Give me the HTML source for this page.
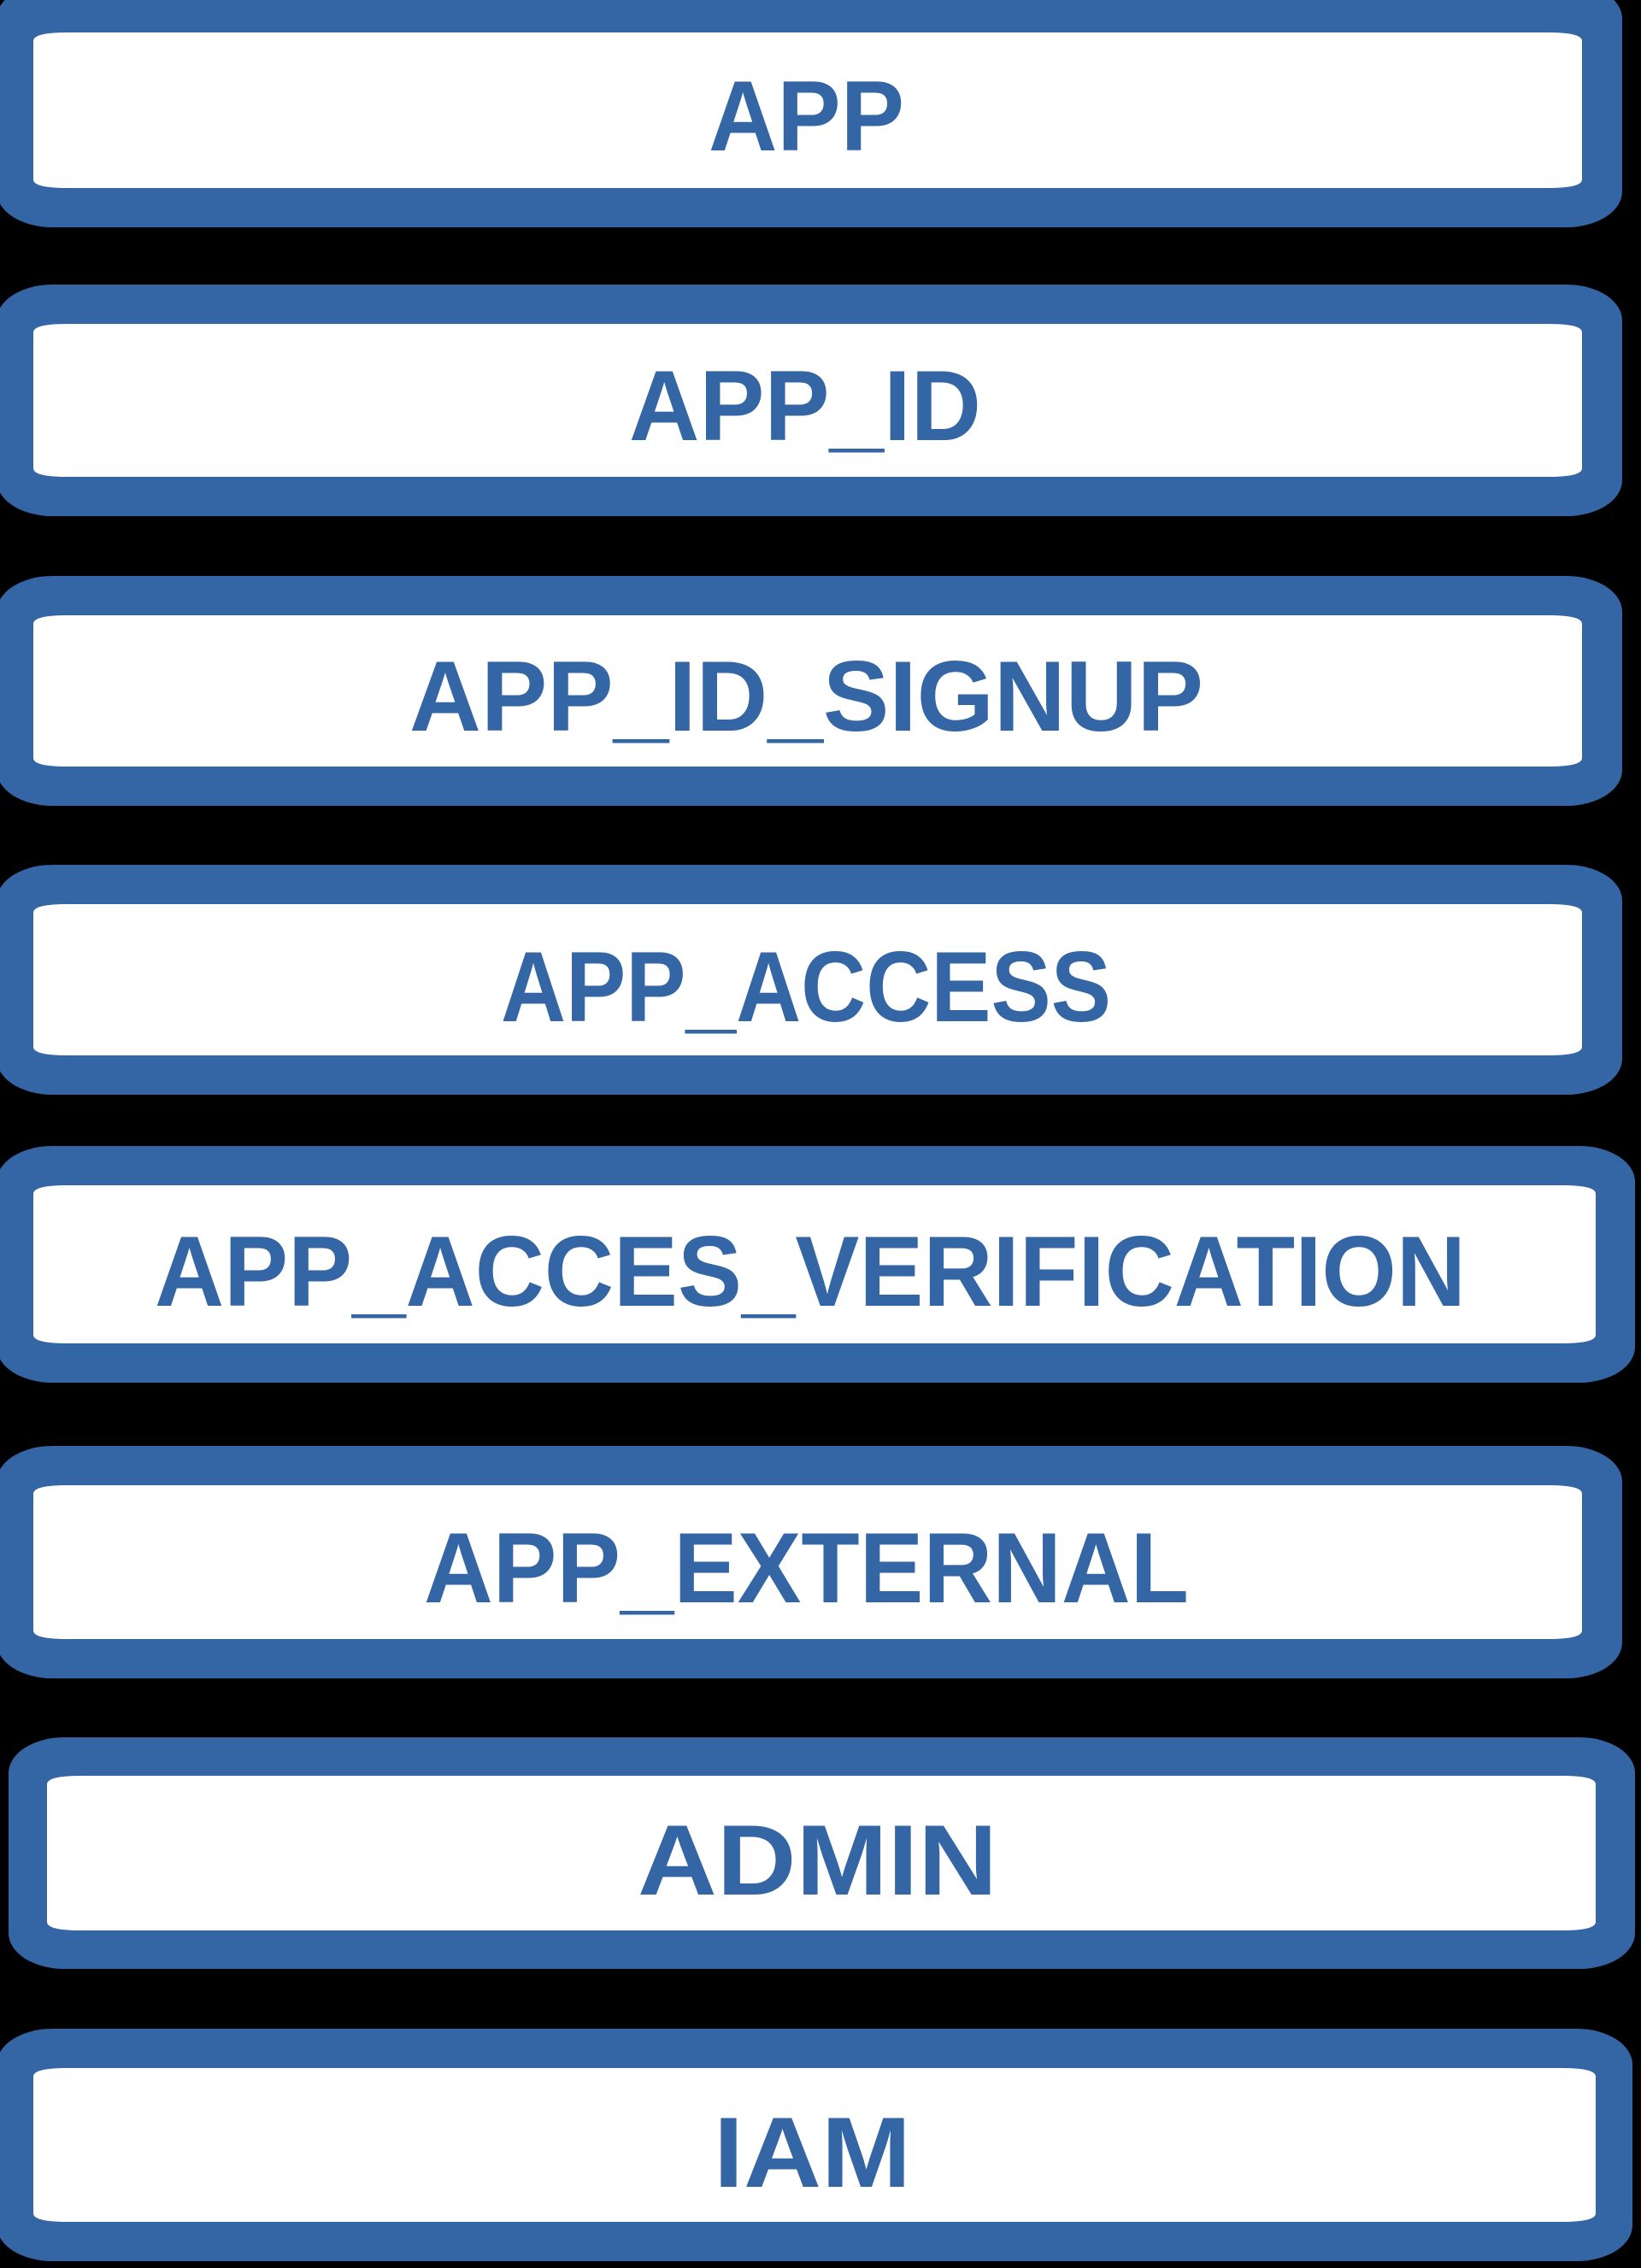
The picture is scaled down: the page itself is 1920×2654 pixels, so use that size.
<!DOCTYPE html>
<html><head><meta charset="utf-8"><style>
html,body{margin:0;padding:0;background:#000;}
svg{display:block;}
text{font-family:"Liberation Sans",sans-serif;font-weight:bold;font-size:117px;fill:#3465a5;}
</style></head><body>
<svg width="1920" height="2654" viewBox="0 0 1920 2654" xmlns="http://www.w3.org/2000/svg">
<rect width="1920" height="2654" fill="#000"/>
<g fill="#3465a5">
<rect x="-4" y="-20" width="1902" height="286" rx="65" ry="42"/>
<rect x="-4" y="333" width="1902" height="271" rx="65" ry="42"/>
<rect x="-4" y="674" width="1902" height="269" rx="65" ry="42"/>
<rect x="-4" y="1012" width="1902" height="269" rx="65" ry="42"/>
<rect x="-4" y="1341" width="1917" height="277" rx="65" ry="42"/>
<rect x="-4" y="1692" width="1902" height="272" rx="65" ry="42"/>
<rect x="10" y="2033" width="1903" height="271" rx="65" ry="42"/>
<rect x="-4" y="2374" width="1914" height="272" rx="65" ry="42"/>
</g>
<g fill="#fff">
<path d="M39,48 Q39,38 79,38 L1811,38 Q1851,38 1851,48 L1851,210 Q1851,220 1811,220 L79,220 Q39,220 39,210 Z"/>
<path d="M39,389 Q39,379 79,379 L1811,379 Q1851,379 1851,389 L1851,548 Q1851,558 1811,558 L79,558 Q39,558 39,548 Z"/>
<path d="M39,730 Q39,720 79,720 L1811,720 Q1851,720 1851,730 L1851,887 Q1851,897 1811,897 L79,897 Q39,897 39,887 Z"/>
<path d="M39,1068 Q39,1058 79,1058 L1811,1058 Q1851,1058 1851,1068 L1851,1225 Q1851,1235 1811,1235 L79,1235 Q39,1235 39,1225 Z"/>
<path d="M39,1397 Q39,1387 79,1387 L1827,1387 Q1867,1387 1867,1397 L1867,1562 Q1867,1572 1827,1572 L79,1572 Q39,1572 39,1562 Z"/>
<path d="M39,1748 Q39,1738 79,1738 L1811,1738 Q1851,1738 1851,1748 L1851,1908 Q1851,1918 1811,1918 L79,1918 Q39,1918 39,1908 Z"/>
<path d="M55,2088 Q55,2078 95,2078 L1827,2078 Q1867,2078 1867,2088 L1867,2249 Q1867,2259 1827,2259 L95,2259 Q55,2259 55,2249 Z"/>
<path d="M39,2430 Q39,2420 79,2420 L1827,2420 Q1867,2420 1867,2430 L1867,2590 Q1867,2600 1827,2600 L79,2600 Q39,2600 39,2590 Z"/>
</g>
<text x="829" y="176" textLength="229" lengthAdjust="spacingAndGlyphs">APP</text>
<text x="736" y="515" textLength="412" lengthAdjust="spacingAndGlyphs">APP_ID</text>
<text x="479" y="855" textLength="929" lengthAdjust="spacingAndGlyphs">APP_ID_SIGNUP</text>
<text x="586" y="1195" textLength="714" lengthAdjust="spacingAndGlyphs">APP_ACCESS</text>
<text x="181" y="1528" textLength="1534" lengthAdjust="spacingAndGlyphs">APP_ACCES_VERIFICATION</text>
<text x="496" y="1875" textLength="895" lengthAdjust="spacingAndGlyphs">APP_EXTERNAL</text>
<text x="746" y="2217" textLength="421" lengthAdjust="spacingAndGlyphs">ADMIN</text>
<text x="835" y="2559" textLength="231" lengthAdjust="spacingAndGlyphs">IAM</text>
</svg>
</body></html>
